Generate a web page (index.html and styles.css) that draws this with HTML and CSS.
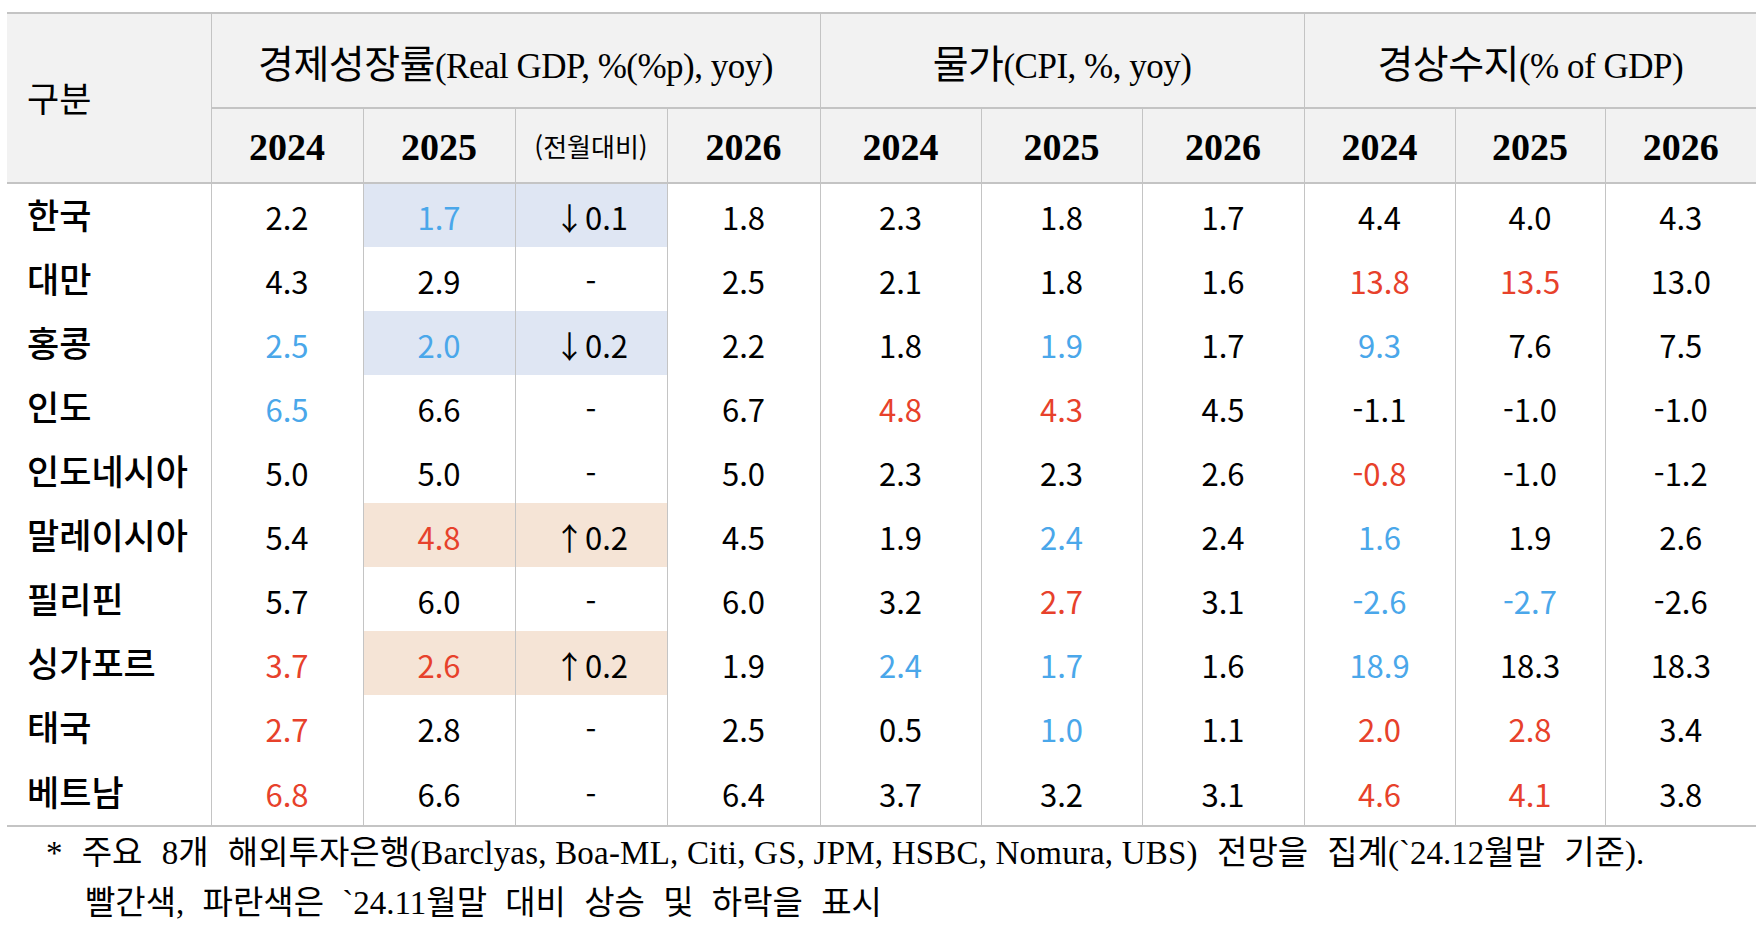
FILE: index.html
```html
<!DOCTYPE html>
<html lang="ko">
<head>
<meta charset="utf-8">
<title>IB 전망</title>
<link rel="stylesheet" href="styles.css">
</head>
<body>
<div class="page">
<table class="tbl">
  <colgroup>
    <col class="c-label">
    <col class="c-g"><col class="c-g"><col class="c-g"><col class="c-g2">
    <col class="c-p"><col class="c-p"><col class="c-p2">
    <col class="c-a"><col class="c-a2"><col class="c-a">
  </colgroup>
  <thead>
    <tr class="h1">
      <th rowspan="2" class="lab">구분</th>
      <th colspan="4" class="grp"><span class="ko">경제성장률</span>(Real GDP, %(%p), yoy)</th>
      <th colspan="3" class="grp"><span class="ko">물가</span>(CPI, %, yoy)</th>
      <th colspan="3" class="grp"><span class="ko">경상수지</span>(% of GDP)</th>
    </tr>
    <tr class="h2">
      <th class="yr">2024</th><th class="yr">2025</th><th class="chg">(전월대비)</th><th class="yr">2026</th>
      <th class="yr">2024</th><th class="yr">2025</th><th class="yr">2026</th>
      <th class="yr">2024</th><th class="yr">2025</th><th class="yr">2026</th>
    </tr>
  </thead>
  <tbody>
    <tr><td class="lab">한국</td><td>2.2</td><td class="bg-b b">1.7</td><td class="bg-b">↓0.1</td><td>1.8</td><td>2.3</td><td>1.8</td><td>1.7</td><td>4.4</td><td>4.0</td><td>4.3</td></tr>
    <tr><td class="lab">대만</td><td>4.3</td><td>2.9</td><td>-</td><td>2.5</td><td>2.1</td><td>1.8</td><td>1.6</td><td class="r">13.8</td><td class="r">13.5</td><td>13.0</td></tr>
    <tr><td class="lab">홍콩</td><td class="b">2.5</td><td class="bg-b b">2.0</td><td class="bg-b">↓0.2</td><td>2.2</td><td>1.8</td><td class="b">1.9</td><td>1.7</td><td class="b">9.3</td><td>7.6</td><td>7.5</td></tr>
    <tr><td class="lab">인도</td><td class="b">6.5</td><td>6.6</td><td>-</td><td>6.7</td><td class="r">4.8</td><td class="r">4.3</td><td>4.5</td><td>-1.1</td><td>-1.0</td><td>-1.0</td></tr>
    <tr><td class="lab">인도네시아</td><td>5.0</td><td>5.0</td><td>-</td><td>5.0</td><td>2.3</td><td>2.3</td><td>2.6</td><td class="r">-0.8</td><td>-1.0</td><td>-1.2</td></tr>
    <tr><td class="lab">말레이시아</td><td>5.4</td><td class="bg-o r">4.8</td><td class="bg-o">↑0.2</td><td>4.5</td><td>1.9</td><td class="b">2.4</td><td>2.4</td><td class="b">1.6</td><td>1.9</td><td>2.6</td></tr>
    <tr><td class="lab">필리핀</td><td>5.7</td><td>6.0</td><td>-</td><td>6.0</td><td>3.2</td><td class="r">2.7</td><td>3.1</td><td class="b">-2.6</td><td class="b">-2.7</td><td>-2.6</td></tr>
    <tr><td class="lab">싱가포르</td><td class="r">3.7</td><td class="bg-o r">2.6</td><td class="bg-o">↑0.2</td><td>1.9</td><td class="b">2.4</td><td class="b">1.7</td><td>1.6</td><td class="b">18.9</td><td>18.3</td><td>18.3</td></tr>
    <tr><td class="lab">태국</td><td class="r">2.7</td><td>2.8</td><td>-</td><td>2.5</td><td>0.5</td><td class="b">1.0</td><td>1.1</td><td class="r">2.0</td><td class="r">2.8</td><td>3.4</td></tr>
    <tr class="last"><td class="lab">베트남</td><td class="r">6.8</td><td>6.6</td><td>-</td><td>6.4</td><td>3.7</td><td>3.2</td><td>3.1</td><td class="r">4.6</td><td class="r">4.1</td><td>3.8</td></tr>
  </tbody>
</table>
<div class="note">
  <p class="n1">* 주요 8개 해외투자은행<span class="tight">(Barclyas, Boa-ML, Citi, GS, JPM, HSBC, Nomura, UBS)</span> 전망을 집계(`24.12월말 기준).</p>
  <p class="n2">빨간색, 파란색은 `24.11월말 대비 상승 및 하락을 표시</p>
</div>
</div>
</body>
</html>
```

FILE: styles.css
```css
html, body {
  margin: 0;
  padding: 0;
  background: #ffffff;
}
.page {
  padding: 12px 0 0 7px;
}
.tbl {
  border-collapse: collapse;
  table-layout: fixed;
  width: 1749px;
  color: #000;
}
.c-label { width: 204px; }
.c-g { width: 152px; }
.c-g2 { width: 153px; }
.c-p { width: 161px; }
.c-p2 { width: 162px; }
.c-a { width: 151px; }
.c-a2 { width: 150px; }

.tbl th, .tbl td {
  padding: 0;
  border-left: 1px solid #c4c4c4;
  border-right: 1px solid #c4c4c4;
  text-align: center;
  vertical-align: middle;
  white-space: nowrap;
}
.tbl th:first-child, .tbl td:first-child { border-left: none; }
.tbl thead th {
  background: #f2f2f2;
  font-weight: normal;
  border-top: 2px solid #c4c4c4;
  border-bottom: 2px solid #c4c4c4;
}
.tbl tr.h2 th:last-child { border-right: none; }
.tbl tr.h1 th:last-child { border-right: none; }
.tbl tbody td:last-child { border-right: none; }

.h1 { height: 95px; }
.h2 { height: 75px; }
.tbl tbody tr { height: 64px; }
.tbl tbody tr.last td { border-bottom: 2px solid #c4c4c4; height: 62px; }

.grp {
  font-family: "Liberation Serif", "Noto Sans CJK KR", serif;
  font-size: 35px;
  letter-spacing: -0.5px;
}
.grp .ko {
  font-family: "Noto Sans CJK KR", sans-serif;
  font-size: 39px;
  letter-spacing: -0.5px;
}
th.lab {
  text-align: left;
  padding-left: 20px;
  padding-bottom: 4px;
  font-family: "Noto Sans CJK KR", sans-serif;
  font-size: 35px;
  font-weight: 500;
}
.yr {
  font-family: "Liberation Serif", serif;
  font-size: 38px;
  font-weight: bold !important;
  padding-top: 2px !important;
}
.chg {
  font-family: "Noto Sans CJK KR", sans-serif;
  font-size: 26px;
}
.tbl td {
  font-family: "Noto Sans CJK KR", sans-serif;
  font-size: 31px;
  padding-top: 2px;
}
.tbl td.lab {
  text-align: left;
  padding-left: 20px;
  padding-top: 0;
  padding-bottom: 4px;
  font-size: 35px;
  font-weight: 500;
}
.bg-b { background: #dfe6f3; }
.bg-o { background: #f5e4d6; }
.r { color: #e7412b; }
.b { color: #4aa7ea; }

.note {
  font-family: "Liberation Serif", "Noto Sans CJK KR", serif;
  font-size: 33px;
  word-spacing: 11px;
  color: #000;
}
.note .tight { word-spacing: 0; letter-spacing: 0.2px; }
.note p {
  margin: 0;
  line-height: 50px;
}
.n1 { padding-left: 39px; padding-top: 1px; }
.n2 { padding-left: 78px; word-spacing: 10px; }
```
